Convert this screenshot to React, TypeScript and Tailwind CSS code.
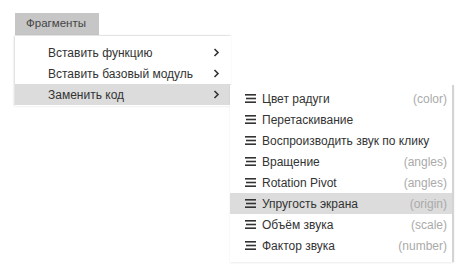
import React from "react";

const mainItems = [
  { label: "Вставить функцию", active: false },
  { label: "Вставить базовый модуль", active: false },
  { label: "Заменить код", active: true },
];

const subItems = [
  { label: "Цвет радуги", hint: "(color)" },
  { label: "Перетаскивание", hint: "" },
  { label: "Воспроизводить звук по клику", hint: "" },
  { label: "Вращение", hint: "(angles)" },
  { label: "Rotation Pivot", hint: "(angles)" },
  { label: "Упругость экрана", hint: "(origin)", active: true },
  { label: "Объём звука", hint: "(scale)" },
  { label: "Фактор звука", hint: "(number)" },
];

const Chevron = () => (
  <svg width="7" height="9" viewBox="0 0 7 9" className="shrink-0">
    <path d="M1.5 1 L5 4.5 L1.5 8" fill="none" stroke="#333" strokeWidth="1.6" />
  </svg>
);

const BarsIcon = () => (
  <svg width="11" height="9" viewBox="0 0 11 9" className="shrink-0">
    <rect x="0" y="0" width="11" height="1.6" fill="#333" />
    <rect x="1" y="3.7" width="10" height="1.6" fill="#333" />
    <rect x="0" y="7.4" width="11" height="1.6" fill="#333" />
  </svg>
);

const App = () => {
  return (
    <div className="relative w-[474px] h-[266px] bg-white overflow-hidden font-['Liberation_Sans',Arial,sans-serif] text-[12px] text-[#333]">
      <div className="absolute left-[15px] top-[13px] w-[84px] h-[22px] bg-[#c6c6c6] flex items-center pl-[11px] text-[#444] text-[11.5px]">
        Фрагменты
      </div>

      {/* main dropdown */}
      <div className="absolute left-[15px] top-[36px] w-[216px] bg-white pt-[6px] pb-[1px] shadow-[-1px_0_2px_rgba(0,0,0,0.15),0_-1px_1px_rgba(0,0,0,0.06)]">
        {mainItems.map((item) => (
          <div
            key={item.label}
            className={`h-[21px] flex items-center justify-between pl-[33px] pr-[11px] ${item.active ? "bg-[#dcdcdc]" : ""}`}
          >
            <span>{item.label}</span>
            <Chevron />
          </div>
        ))}
      </div>

      {/* submenu */}
      <div className="absolute left-[230px] top-[85px] w-[224px] h-[177px] bg-white pt-[3px] border-r-2 border-[#d4d4d4] shadow-[0_1px_2px_rgba(0,0,0,0.08)]">
        {subItems.map((item) => (
          <div
            key={item.label}
            className={`h-[21px] flex items-center pl-[15px] pr-[5px] ${item.active ? "bg-[#dcdcdc]" : ""}`}
          >
            <BarsIcon />
            <span className="ml-[6px] flex-1">{item.label}</span>
            {item.hint && <span className="text-[#aaa]">{item.hint}</span>}
          </div>
        ))}
      </div>
    </div>
  );
};

export default App;
